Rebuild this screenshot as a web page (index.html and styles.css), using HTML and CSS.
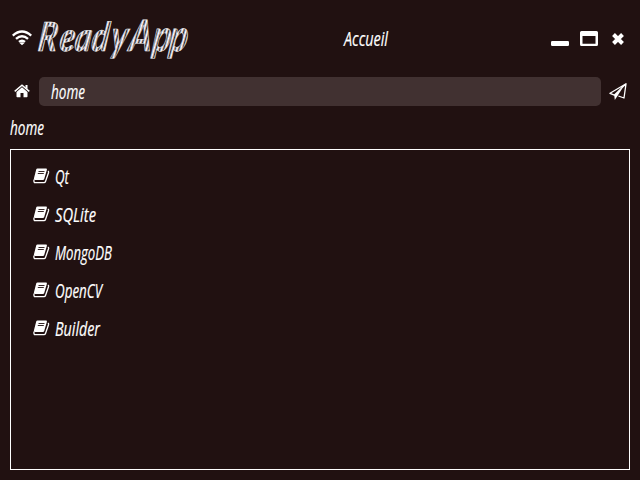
FILE: index.html
```
<!DOCTYPE html>
<html lang="fr">
<head>
<meta charset="utf-8">
<title>ReadyApp</title>
<link rel="stylesheet" href="styles.css">
</head>
<body>
<svg class="defs" aria-hidden="true">
  <defs>
    <linearGradient id="strands" gradientUnits="userSpaceOnUse" x1="0" y1="0" x2="4.600" y2=".9" spreadMethod="repeat">
      <stop offset="0" stop-color="#3b2a3a"/><stop offset=".25" stop-color="#7bb4e8"/><stop offset=".5" stop-color="#fff"/><stop offset=".75" stop-color="#e0a878"/><stop offset="1" stop-color="#3b2a3a"/>
    </linearGradient>
    <symbol id="book" viewBox="0 0 17 17">
      <path d="M4.500 .5H13q1.200 0 .9 1.200L11.200 11q-.3.9-1.300.9H1.800Q.5 11.900 .9 10.500L3.200 1.500Q3.500.5 4.500.5Z" fill="#fff"/>
      <path d="M5.500 3.500h6M4.800 5.500h6" stroke="#211111" stroke-width=".9"/>
      <path d="M1 11.500Q.5 14.700 2.300 14.700H11q1.100 0 1.500-1.200L15.600 4.500q.3-1.100-.8-1.500" fill="none" stroke="#fff" stroke-width="1.300"/>
    </symbol>
  </defs>
</svg>
<main class="window">
  <header class="titlebar">
    <svg class="wifi" viewBox="0 0 20 16"><g fill="none" stroke="#fff" stroke-width="2.400"><path d="M.8 5.700Q10-2.500 19.200 5.700M4 8.900q6-5.200 12 0M7 11.900q3-2.500 6 0"/></g><path d="M7.500 12.900q2.500-1.400 5 0L10 15.300Z" fill="#fff"/></svg>
    <svg class="logo" viewBox="0 0 154 52"><g transform="translate(0 38) skewX(-7) scale(.8 1)"><text class="logo-text" x="0 27 46 67 91 114 143 164" y="0">Read<tspan class="tall">yApp</tspan></text></g></svg>
    <svg class="label page-title" viewBox="0 0 50 28"><text x="1" y="20" textLength="44" lengthAdjust="spacingAndGlyphs">Accueil</text></svg>
    <div class="controls">
      <svg class="control" viewBox="0 0 18 18"><rect y="11" width="18" height="5" rx="1.200"/></svg>
      <svg class="control" viewBox="0 0 18 18"><path fill-rule="evenodd" d="M1.500 1h15Q18 1 18 2.500v12q0 1.500-1.500 1.500h-15Q0 16 0 14.500v-12Q0 1 1.500 1ZM2.500 6v7.800h13V6Z"/></svg>
      <svg class="control" viewBox="0 0 18 18"><path d="m4.500 4.500 9 9m0-9-9 9" stroke="#fff" stroke-width="4"/></svg>
    </div>
  </header>
  <nav class="address">
    <svg class="house" viewBox="0 0 16 14"><path d="M.7 7.300 8 1.200l7.300 6.100" fill="none" stroke="#fff" stroke-width="1.500"/><path d="M11.500 1h2v4l-2-1.600ZM8 3.300l5.500 4.600v4.500q0 .8-.8.8H9.500V9h-3v4.200H3.300q-.8 0-.8-.8V7.900Z" fill="#fff"/></svg>
    <div class="field"><svg class="label" viewBox="0 0 50 28"><text x="0" y="22" textLength="34" lengthAdjust="spacingAndGlyphs">home</text></svg></div>
    <svg class="send" viewBox="0 0 18 18"><path d="M17 .8 1 10.300l4.300 1.900L17 .8l-2 14.200-5.600-2" fill="none" stroke="#fff" stroke-width="1.300" stroke-linejoin="round"/><path d="M5.200 12 13.500 5 8.600 12.800 5.800 17Z" fill="#fff"/></svg>
  </nav>
  <div class="crumb"><svg class="label" viewBox="0 0 50 28"><text x="0" y="20" textLength="34" lengthAdjust="spacingAndGlyphs">home</text></svg></div>
  <ul class="library">
    <li><svg class="book"><use href="#book"/></svg><svg class="label wide" viewBox="0 0 80 28"><text x="0" y="21" textLength="14" lengthAdjust="spacingAndGlyphs">Qt</text></svg></li>
    <li><svg class="book"><use href="#book"/></svg><svg class="label wide" viewBox="0 0 80 28"><text x="0" y="21" textLength="41" lengthAdjust="spacingAndGlyphs">SQLite</text></svg></li>
    <li><svg class="book"><use href="#book"/></svg><svg class="label wide" viewBox="0 0 80 28"><text x="0" y="21" textLength="57" lengthAdjust="spacingAndGlyphs">MongoDB</text></svg></li>
    <li><svg class="book"><use href="#book"/></svg><svg class="label wide" viewBox="0 0 80 28"><text x="0" y="21" textLength="47" lengthAdjust="spacingAndGlyphs">OpenCV</text></svg></li>
    <li><svg class="book"><use href="#book"/></svg><svg class="label wide" viewBox="0 0 80 28"><text x="0" y="21" textLength="45" lengthAdjust="spacingAndGlyphs">Builder</text></svg></li>
  </ul>
</main>
</body>
</html>
```
FILE: styles.css
```
* { box-sizing: border-box; }
body { margin: 0; background: #211111; color: #fff; font-family: "Open Sans", sans-serif; }
svg { display: block; flex: none; }
.defs { width: 0; height: 0; position: absolute; }
.window { width: 640px; height: 480px; padding: 10px; display: flex; flex-direction: column; }
.label { width: 50px; height: 28px; overflow: visible; }
.label.wide { width: 80px; }
.label text { font: italic 400 20px "Open Sans", sans-serif; fill: #fff; stroke: #fff; stroke-width: .2px; }
.titlebar { height: 58px; display: flex; align-items: center; }
.wifi { width: 20px; height: 16px; margin: -2px 5px 0 2px; }
.logo { width: 154px; height: 52px; overflow: visible; }
.logo-text { font: italic 700 40px Lato, sans-serif; fill: url(#strands); stroke: #eee; stroke-width: .6px; }
.tall { font-size: 43px; }
.page-title { margin-left: 152px; margin-top: 2px; }
.controls { margin: -1px 3px 0 auto; display: flex; gap: 11px; }
.control { width: 18px; height: 18px; fill: #fff; }
.address { height: 29px; margin-top: 9px; display: flex; align-items: center; }
.house { width: 16px; height: 14px; margin: -1px 9px 0 4px; }
.field { flex: 1; height: 29px; padding-left: 12px; background: #413131; border-radius: 5px; }
.send { width: 18px; height: 18px; margin: 0 3px 0 8px; }
.crumb { height: 43px; padding-top: 9px; }
.library { flex: 1; margin: 0; padding: 8px 22px; border: 1px solid #fff; list-style: none; }
.library li { height: 38px; display: flex; align-items: center; }
.book { width: 17px; height: 17px; margin-right: 5px; margin-top: -1px; }
```
